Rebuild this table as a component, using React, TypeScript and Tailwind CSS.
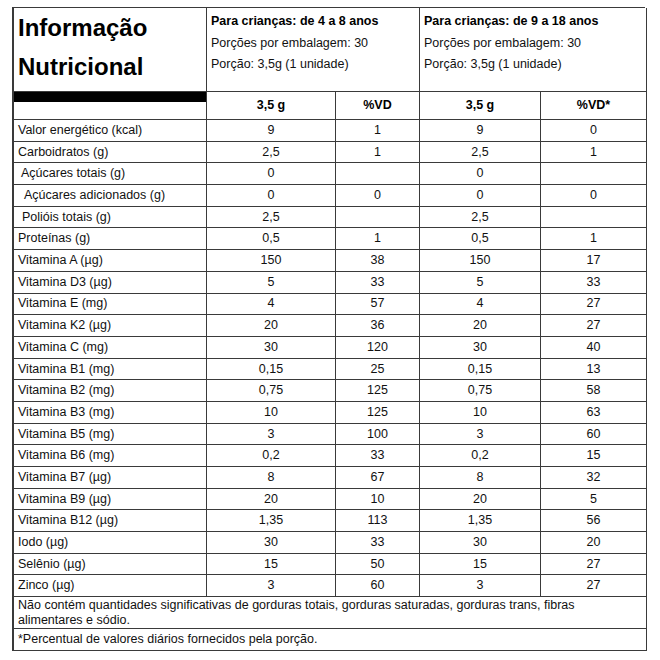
const ROWS: { label: string; indent?: string; values: string[] }[] = [
  { label: "Valor energético (kcal)", values: ["9", "1", "9", "0"] },
  { label: "Carboidratos (g)", values: ["2,5", "1", "2,5", "1"] },
  { label: "Açúcares totais (g)", indent: "pl-[7px]", values: ["0", "", "0", ""] },
  { label: "Açúcares adicionados (g)", indent: "pl-[10px]", values: ["0", "0", "0", "0"] },
  { label: "Polióis totais (g)", indent: "pl-[8px]", values: ["2,5", "", "2,5", ""] },
  { label: "Proteínas (g)", values: ["0,5", "1", "0,5", "1"] },
  { label: "Vitamina A (µg)", values: ["150", "38", "150", "17"] },
  { label: "Vitamina D3 (µg)", values: ["5", "33", "5", "33"] },
  { label: "Vitamina E (mg)", values: ["4", "57", "4", "27"] },
  { label: "Vitamina K2 (µg)", values: ["20", "36", "20", "27"] },
  { label: "Vitamina C (mg)", values: ["30", "120", "30", "40"] },
  { label: "Vitamina B1 (mg)", values: ["0,15", "25", "0,15", "13"] },
  { label: "Vitamina B2 (mg)", values: ["0,75", "125", "0,75", "58"] },
  { label: "Vitamina B3 (mg)", values: ["10", "125", "10", "63"] },
  { label: "Vitamina B5 (mg)", values: ["3", "100", "3", "60"] },
  { label: "Vitamina B6 (mg)", values: ["0,2", "33", "0,2", "15"] },
  { label: "Vitamina B7 (µg)", values: ["8", "67", "8", "32"] },
  { label: "Vitamina B9 (µg)", values: ["20", "10", "20", "5"] },
  { label: "Vitamina B12 (µg)", values: ["1,35", "113", "1,35", "56"] },
  { label: "Iodo (µg)", values: ["30", "33", "30", "20"] },
  { label: "Selênio (µg)", values: ["15", "50", "15", "27"] },
  { label: "Zinco (µg)", values: ["3", "60", "3", "27"] },
];

const GROUPS = ["Para crianças: de 4 a 8 anos", "Para crianças: de 9 a 18 anos"];

const cell = "border-r border-b border-[#3a3a3a]";

export default function App() {
  return (
    <div className="min-h-[660px] bg-white pl-[12px] pt-[7px] text-[12.5px] text-[#111] font-['Liberation_Sans',Arial,sans-serif]">
      <div className="grid w-[633px] grid-cols-[193px_129px_84px_121px_106px] border-l-2 border-t border-[#3a3a3a]">
        <div className={`${cell} h-[84px] pl-[4px] pt-0 text-[24px] font-bold leading-[39px] text-black`}>
          Informação
          <br />
          Nutricional
        </div>

        {GROUPS.map((group) => (
          <div
            key={group}
            className={`${cell} col-span-2 h-[84px] pl-[4px] pt-[3px] leading-[21.5px]`}
          >
            <div className="font-bold text-black">{group}</div>
            <div>Porções por embalagem: 30</div>
            <div>Porção: 3,5g (1 unidade)</div>
          </div>
        ))}

        <div className={`${cell} h-[28px]`}>
          <div className="h-[10px] bg-black" />
        </div>
        {["3,5 g", "%VD", "3,5 g", "%VD*"].map((head, index) => (
          <div
            key={index}
            className={`${cell} flex h-[28px] items-center justify-center font-bold text-black`}
          >
            {head}
          </div>
        ))}

        {ROWS.map((row) => (
          <div key={row.label} className="contents">
            <div
              className={`${cell} flex h-[21.7px] items-center ${row.indent ?? "pl-[4px]"}`}
            >
              {row.label}
            </div>
            {row.values.map((value, index) => (
              <div
                key={index}
                className={`${cell} flex h-[21.7px] items-center justify-center`}
              >
                {value}
              </div>
            ))}
          </div>
        ))}

        <div className={`${cell} col-span-5 flex h-[32px] items-center pl-[4px] leading-[15px]`}>
          <p>
            Não contém quantidades significativas de gorduras totais, gorduras saturadas, gorduras trans, fibras
            <br />
            alimentares e sódio.
          </p>
        </div>
        <div className={`${cell} col-span-5 flex h-[22px] items-center pl-[4px]`}>
          *Percentual de valores diários fornecidos pela porção.
        </div>
      </div>
    </div>
  );
}
